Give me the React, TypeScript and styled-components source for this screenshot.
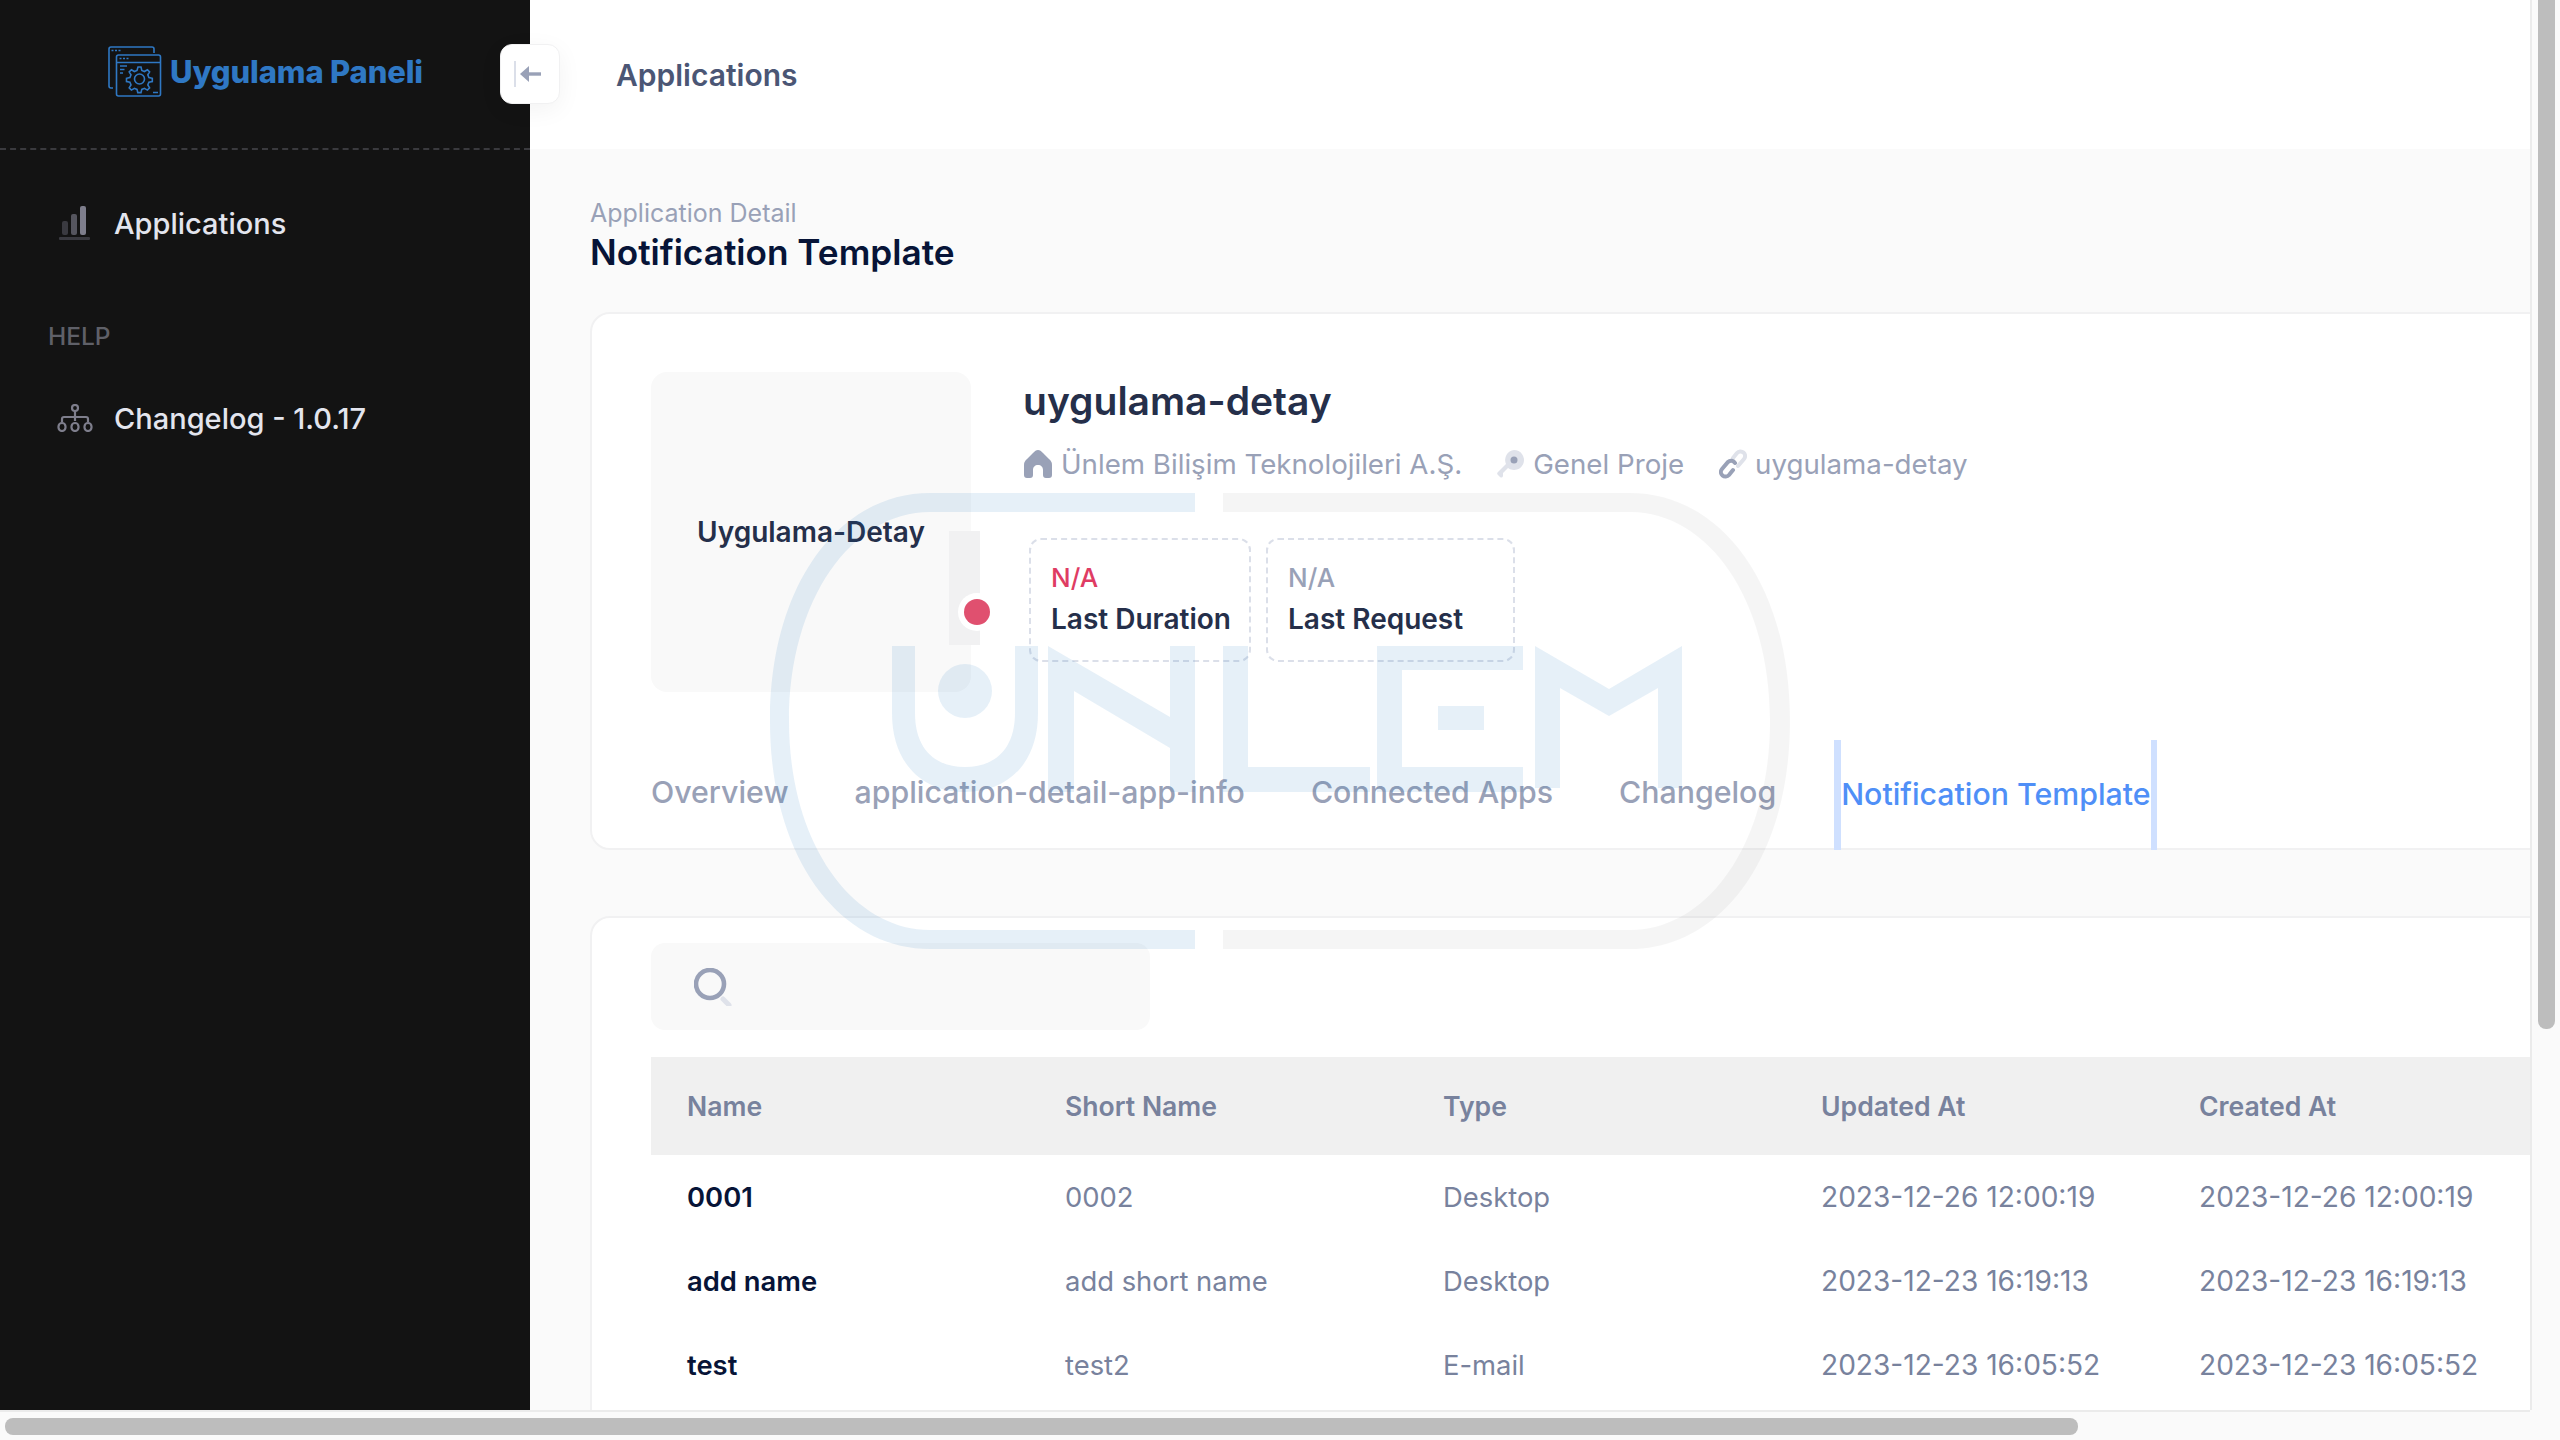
import { createGlobalStyle, styled } from "styled-components";

const GlobalStyle = createGlobalStyle`
  html, body {
    margin: 0;
    padding: 0;
    overflow: hidden;
    background: #fafafa;
    font-family: Inter, "Noto Sans", sans-serif;
  }
  * { box-sizing: border-box; }
`;

const rows = [
  { name: "0001", shortName: "0002", type: "Desktop", updated: "2023-12-26 12:00:19", created: "2023-12-26 12:00:19" },
  { name: "add name", shortName: "add short name", type: "Desktop", updated: "2023-12-23 16:19:13", created: "2023-12-23 16:19:13" },
  { name: "test", shortName: "test2", type: "E-mail", updated: "2023-12-23 16:05:52", created: "2023-12-23 16:05:52" },
];

const LogoIcon = () => (
  <svg width="54" height="51" viewBox="0 0 54 51" fill="none" stroke="#2f78c4" strokeWidth="1.6">
    <path d="M5 42H3a2 2 0 0 1-2-2V3a2 2 0 0 1 2-2h41a2 2 0 0 1 2 2v4" />
    <rect x="8.5" y="9" width="44" height="41" rx="2" />
    <path d="M9 16.5h43" />
    <path d="M3.5 4.5h2M7 4.5h2M10.5 4.5h2M11.5 12.5h2M15 12.5h2M18.5 12.5h2M12 20h7M12 23.5h4.5M12 27h3M45 46.5h5" />
    <path d="M30 21l3 0 .8 3.4 2.6 1.1 3-1.8 2.2 2.2-1.8 3 1.1 2.6 3.4.8v3.2l-3.4.8-1.1 2.6 1.8 3-2.2 2.2-3-1.8-2.6 1.1-.8 3.2h-3.2l-.8-3.2-2.6-1.1-3 1.8-2.2-2.2 1.8-3-1.1-2.6-3.4-.8v-3.2l3.4-.8 1.1-2.6-1.8-3 2.2-2.2 3 1.8 2.6-1.1z" />
    <circle cx="31.5" cy="33" r="5" />
  </svg>
);

const BarsIcon = () => (
  <svg width="32" height="34" viewBox="0 0 32 34" fill="none">
    <rect x="3" y="15" width="6" height="14" rx="2" fill="#3a3a40" />
    <rect x="12" y="8" width="6" height="21" rx="2" fill="#55555e" />
    <rect x="21" y="0" width="6" height="29" rx="2" fill="#7e7e8c" />
    <rect x="0" y="31" width="31" height="3" rx="1" fill="#3a3a40" />
  </svg>
);

const TreeIcon = () => (
  <svg width="36" height="28" viewBox="0 0 36 28" fill="none" stroke="#7e7e8c" strokeWidth="2.2">
    <circle cx="18" cy="4" r="3" />
    <path d="M18 7v10M5 18v-3a2 2 0 0 1 2-2h22a2 2 0 0 1 2 2v3" />
    <rect x="1.5" y="19" width="7" height="8" rx="3.5" />
    <rect x="14.5" y="19" width="7" height="8" rx="3.5" />
    <rect x="27.5" y="19" width="7" height="8" rx="3.5" />
  </svg>
);

const ArrowIcon = () => (
  <svg width="28" height="26" viewBox="0 0 28 26" fill="none">
    <rect x="0" y="0" width="2" height="26" fill="#dbdfe9" />
    <path d="M27 13H9" stroke="#99a1b7" strokeWidth="3.4" />
    <path d="M15 5l-9 8 9 8z" fill="#99a1b7" />
  </svg>
);

const HomeIcon = () => (
  <svg width="30" height="30" viewBox="0 0 30 30">
    <path d="M15 1C17 1 18 2 20 4l6 6c2 2 3 3 3 6v10c0 2-1 3-3 3h-3c-2 0-3-1-3-3v-5c0-3-2-5-5-5s-5 2-5 5v5c0 2-1 3-3 3H4c-2 0-3-1-3-3V16c0-3 1-4 3-6l6-6c2-2 3-3 5-3z" fill="#99a1b7" />
  </svg>
);

const KeyIcon = () => (
  <svg width="28" height="30" viewBox="0 0 28 30">
    <path d="M17 1a10 10 0 1 1-6 18l-5 5v3a2 2 0 0 1-3 1l-2-2a2 2 0 0 1 0-3l8-8A10 10 0 0 1 17 1z" fill="#dfe2ea" />
    <circle cx="17" cy="11" r="3.5" fill="#99a1b7" />
  </svg>
);

const LinkIcon = () => (
  <svg width="28" height="30" viewBox="0 0 28 30" fill="none" strokeWidth="4" strokeLinecap="round">
    <path d="M14 9l4-5a4.5 4.5 0 0 1 7 6l-6 7" stroke="#dfe2ea" />
    <path d="M14 21l-4 5a4.5 4.5 0 0 1-7-6l6-7a4.5 4.5 0 0 1 7 1" stroke="#99a1b7" />
  </svg>
);

const SearchIcon = () => (
  <svg width="38" height="38" viewBox="0 0 38 38" fill="none" strokeLinecap="round">
    <circle cx="16" cy="16" r="14" stroke="#99a1b7" strokeWidth="4.6" />
    <path d="M29 31l6 6" stroke="#dfe2ea" strokeWidth="5" />
  </svg>
);

const Watermark = () => (
  <WatermarkLayer>
    <svg width="1020" height="456" viewBox="0 0 1020 456">
      <g fill="rgb(25,118,190)" fillOpacity="0.11">
        <path d="M425 0H160C70 0 0 90 0 228s70 228 160 228h265v-19H160C82 437 19 350 19 228S82 19 160 19h265z" />
        <path d="M122 153h23v67c0 36 20 54 50 54s50-18 50-54v-67h23v67c0 50-30 79-73 79s-73-29-73-79z" />
        <circle cx="195" cy="198" r="27" />
        <path d="M278 153l122 71V153h25v146h-25v-44l-96-57v101h-26z" />
        <path d="M453 153h25v121h122v25H453z" />
        <path d="M607 153h146v24H632v97h121v25H607z" />
        <rect x="668" y="213" width="46" height="24" />
        <path d="M765 153l74 43 73-43v142h-24v-100l-49 28-49-28v100h-25z" />
      </g>
      <path
        d="M453 0h407c90 0 160 90 160 228s-70 228-160 228H453v-19h407c78 0 140-87 140-209S938 19 860 19H453z"
        fill="#000"
        fillOpacity="0.04"
      />
    </svg>
  </WatermarkLayer>
);

export default function App() {
  return (
    <Frame>
      <GlobalStyle />
      <Viewport>
        <Sidebar>
          <Brand>
            <LogoIcon />
            <BrandName>Uygulama Paneli</BrandName>
          </Brand>
          <NavList>
            <NavItem>
              <NavIcon>
                <BarsIcon />
              </NavIcon>
              Applications
            </NavItem>
            <NavHeading>HELP</NavHeading>
            <NavItem>
              <NavIcon>
                <TreeIcon />
              </NavIcon>
              Changelog - 1.0.17
            </NavItem>
          </NavList>
        </Sidebar>
        <Main>
          <Header>
            <HeaderTitle>Applications</HeaderTitle>
          </Header>
          <ToggleButton>
            <ArrowIcon />
          </ToggleButton>
          <Body>
            <Crumb>Application Detail</Crumb>
            <PageTitle>Notification Template</PageTitle>
            <DetailCard>
              <DetailTop>
                <AppLogo>
                  Uygulama-Detay
                  <StatusBar />
                  <StatusDot />
                </AppLogo>
                <AppInfo>
                  <AppName>uygulama-detay</AppName>
                  <MetaRow>
                    <MetaItem>
                      <HomeIcon />
                      Ünlem Bilişim Teknolojileri A.Ş.
                    </MetaItem>
                    <MetaItem>
                      <KeyIcon />
                      Genel Proje
                    </MetaItem>
                    <MetaItem>
                      <LinkIcon />
                      uygulama-detay
                    </MetaItem>
                  </MetaRow>
                  <StatRow>
                    <StatBox $width={222}>
                      <StatValue $alert>N/A</StatValue>
                      <StatLabel>Last Duration</StatLabel>
                    </StatBox>
                    <StatBox $width={249}>
                      <StatValue>N/A</StatValue>
                      <StatLabel>Last Request</StatLabel>
                    </StatBox>
                  </StatRow>
                </AppInfo>
              </DetailTop>
              <Tabs>
                <Tab>Overview</Tab>
                <Tab>application-detail-app-info</Tab>
                <Tab>Connected Apps</Tab>
                <Tab>Changelog</Tab>
                <Tab $active>Notification Template</Tab>
              </Tabs>
            </DetailCard>
            <ListCard>
              <SearchBox>
                <SearchIcon />
              </SearchBox>
              <Table>
                <TableHead>
                  <span>Name</span>
                  <span>Short Name</span>
                  <span>Type</span>
                  <span>Updated At</span>
                  <span>Created At</span>
                </TableHead>
                {rows.map((row) => (
                  <TableRow key={row.name}>
                    <NameCell>{row.name}</NameCell>
                    <span>{row.shortName}</span>
                    <span>{row.type}</span>
                    <DateCell>{row.updated}</DateCell>
                    <DateCell>{row.created}</DateCell>
                  </TableRow>
                ))}
              </Table>
            </ListCard>
          </Body>
        </Main>
        <Watermark />
      </Viewport>
      <VerticalTrack>
        <VerticalThumb />
      </VerticalTrack>
      <HorizontalTrack>
        <HorizontalThumb />
      </HorizontalTrack>
      <TrackCorner />
    </Frame>
  );
}

const Frame = styled.div`
  display: grid;
  grid-template-columns: 2530px 30px;
  grid-template-rows: 1410px 30px;
  width: 2560px;
  height: 1440px;
  overflow: hidden;
`;

const Viewport = styled.div`
  position: relative;
  display: flex;
  overflow: hidden;
`;

const Sidebar = styled.aside`
  flex: 0 0 530px;
  background: #131313;
`;

const Brand = styled.div`
  display: flex;
  align-items: center;
  gap: 8px;
  height: 150px;
  padding: 0 0 6px 108px;
  border-bottom: 2px dashed #3a3a3e;
`;

const BrandName = styled.span`
  font-size: 31px;
  font-weight: 800;
  letter-spacing: -0.15px;
  color: #2f78c4;
  white-space: nowrap;
`;

const NavList = styled.nav`
  display: flex;
  flex-direction: column;
  padding-top: 47px;
`;

const NavItem = styled.div`
  display: flex;
  align-items: center;
  height: 52px;
  font-size: 29px;
  font-weight: 500;
  color: #e3e5ee;
`;

const NavIcon = styled.span`
  display: flex;
  justify-content: center;
  width: 36px;
  margin: 0 21px 0 57px;
`;

const NavHeading = styled.div`
  margin: 72px 0 41px 48px;
  font-size: 24.5px;
  font-weight: 500;
  line-height: 30px;
  color: #5f6068;
`;

const Main = styled.main`
  position: relative;
  flex: 0 0 2556px;
  background: #fafafa;
`;

const Header = styled.header`
  display: flex;
  align-items: center;
  height: 149px;
  padding-left: 86px;
  background: #ffffff;
`;

const HeaderTitle = styled.h2`
  margin: 0;
  font-size: 30px;
  font-weight: 600;
  color: #4b5675;
`;

const ToggleButton = styled.div`
  position: absolute;
  top: 44px;
  left: -30px;
  display: flex;
  align-items: center;
  justify-content: flex-start;
  width: 60px;
  height: 60px;
  padding-left: 13px;
  background: #ffffff;
  border: 1px solid #f1f1f2;
  border-radius: 12px;
  box-shadow: 0 6px 24px rgba(0, 0, 0, 0.05);
`;

const Body = styled.div`
  padding: 48px 60px 0;
`;

const Crumb = styled.div`
  font-size: 25px;
  line-height: 32px;
  color: #99a1b7;
`;

const PageTitle = styled.h1`
  margin: 1px 0 38px;
  font-size: 35.2px;
  line-height: 44px;
  font-weight: 600;
  color: #071437;
`;

const DetailCard = styled.section`
  height: 538px;
  padding: 58px 59px 0;
  background: #ffffff;
  border: 2px solid #f1f1f2;
  border-radius: 20px;
`;

const DetailTop = styled.div`
  display: flex;
  gap: 52px;
  height: 368px;
`;

const AppLogo = styled.div`
  position: relative;
  display: flex;
  align-items: center;
  justify-content: center;
  flex: 0 0 320px;
  height: 320px;
  font-size: 28px;
  font-weight: 600;
  color: #252f4a;
  background: #f9f9f9;
  border-radius: 16px;
`;

const StatusBar = styled.span`
  position: absolute;
  top: 159px;
  left: 298px;
  width: 31px;
  height: 114px;
  background: #f1f1f2;
`;

const StatusDot = styled.span`
  position: absolute;
  top: 227px;
  left: 313px;
  width: 26px;
  height: 26px;
  background: #e0506f;
  border-radius: 50%;
  box-shadow: 0 0 0 6px #ffffff;
`;

const AppInfo = styled.div`
  display: flex;
  flex-direction: column;
`;

const AppName = styled.div`
  margin-top: 5px;
  font-size: 39px;
  line-height: 48px;
  font-weight: 600;
  color: #252f4a;
`;

const MetaRow = styled.div`
  display: flex;
  gap: 35px;
  margin-top: 21px;
`;

const MetaItem = styled.span`
  display: flex;
  align-items: center;
  gap: 8px;
  font-size: 27.7px;
  line-height: 36px;
  color: #99a1b7;
`;

const StatRow = styled.div`
  display: flex;
  gap: 15px;
  margin: 56px 0 0 6px;
`;

const StatBox = styled.div<{ $width: number }>`
  width: ${(props) => props.$width}px;
  height: 124px;
  padding: 20px 20px 0;
  border: 2px dashed #dbdfe9;
  border-radius: 12px;
`;

const StatValue = styled.div<{ $alert?: boolean }>`
  font-size: 26px;
  line-height: 36px;
  font-weight: 500;
  color: ${(props) => (props.$alert ? "#df3c63" : "#99a1b7")};
`;

const StatLabel = styled.div`
  margin-top: 5px;
  font-size: 28px;
  line-height: 36px;
  font-weight: 600;
  color: #252f4a;
  white-space: nowrap;
`;

const Tabs = styled.div`
  display: flex;
  align-items: stretch;
  gap: 66px;
  height: 110px;
`;

const Tab = styled.div<{ $active?: boolean }>`
  display: flex;
  align-items: center;
  font-size: 30.3px;
  font-weight: 500;
  white-space: nowrap;
  padding-bottom: ${(props) => (props.$active ? "3px" : "7px")};
  color: ${(props) => (props.$active ? "#4f8ff7" : "#99a1b7")};
  ${(props) =>
    props.$active &&
    `
    margin-left: -8px;
    border-left: 7px solid #cfe0ff;
    border-right: 6px solid #cfe0ff;
  `}
`;

const ListCard = styled.section`
  margin-top: 66px;
  padding: 25px 59px 0;
  height: 700px;
  background: #ffffff;
  border: 2px solid #f1f1f2;
  border-radius: 20px;
`;

const SearchBox = styled.div`
  display: flex;
  align-items: center;
  width: 499px;
  height: 87px;
  padding-left: 43px;
  background: #f9f9f9;
  border-radius: 14px;
`;

const Table = styled.div`
  margin-top: 27px;
  font-size: 27.4px;
`;

const TableHead = styled.div`
  display: grid;
  grid-template-columns: repeat(5, 378px) 1fr;
  align-items: center;
  height: 98px;
  padding-left: 36px;
  font-size: 26.6px;
  font-weight: 600;
  color: #78829d;
  background: #f0f0f0;
`;

const TableRow = styled.div`
  display: grid;
  grid-template-columns: repeat(5, 378px) 1fr;
  align-items: center;
  height: 84px;
  padding-left: 36px;
  color: #78829d;
`;

const NameCell = styled.span`
  font-weight: 600;
  color: #071437;
`;

const DateCell = styled.span`
  font-size: 28.1px;
`;

const WatermarkLayer = styled.div`
  position: absolute;
  top: 493px;
  left: 770px;
  pointer-events: none;
`;

const VerticalTrack = styled.div`
  padding: 0 5px 0 6px;
  background: #fafafa;
  border-left: 2px solid #ebebeb;
`;

const VerticalThumb = styled.div`
  width: 17px;
  height: 1029px;
  background: #bdbdbd;
  border-radius: 0 0 8px 8px;
`;

const HorizontalTrack = styled.div`
  padding: 6px 0 0 5px;
  background: #fafafa;
  border-top: 2px solid #ebebeb;
`;

const HorizontalThumb = styled.div`
  width: 2073px;
  height: 17px;
  background: #bdbdbd;
  border-radius: 8px;
`;

const TrackCorner = styled.div`
  background: #fafafa;
`;
